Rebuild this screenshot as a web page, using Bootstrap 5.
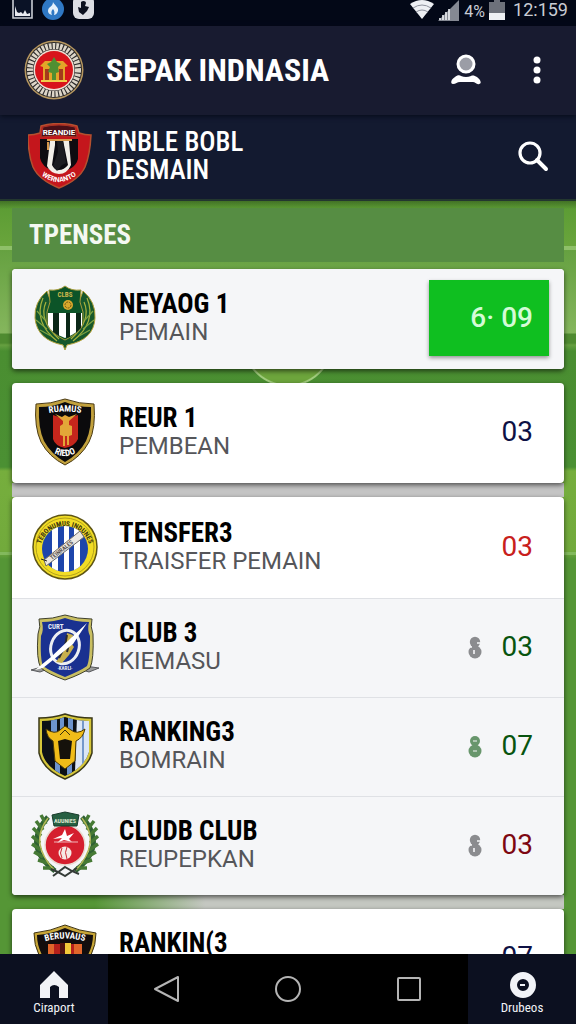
<!DOCTYPE html>
<html lang="id">
<head>
<meta charset="utf-8">
<meta name="viewport" content="width=device-width, initial-scale=1">
<title>Sepak Indnasia</title>
<link href="https://cdn.jsdelivr.net/npm/bootstrap@5.3.0/dist/css/bootstrap.min.css" rel="stylesheet">
<style>
body{font-family:Roboto,"Liberation Sans",sans-serif;background:#559636}
h1,h2,h3,.tab{font-family:"Roboto Condensed",Roboto,"Liberation Sans",sans-serif}
.statusbar{height:26px;background:#030817;color:#c9ccd4;font-size:18px;line-height:20px}
.statusbar small{font-size:16px}
.topbar{height:89px;background:#181b30;box-shadow:0 1px 5px #050a18;z-index:1}
.topbar,.subbar{padding:0 24px 2px;gap:22px}
.topbar h1{font-size:32px;line-height:36px;font-weight:700}
.subbar{height:86px;background:#131a30;border-bottom:2px solid #23372f}
.subbar h2{font-size:27px;line-height:28px;font-weight:500}
.subbar .club-mark{margin:0 -8px 0 4px}
.iconbtn{background:none;border:0;padding:0;color:#fff;line-height:0}
.pitch{scrollbar-width:none;background:
 linear-gradient(#0004,#0000) 0 0/100% 8px no-repeat,
 linear-gradient(#8fc069,#8fc069) 0 45px/100% 4px no-repeat,
 linear-gradient(#82b95c,#82b95c) 0 351px/100% 3px no-repeat,
 radial-gradient(circle at 50% -28px,#6da53c 43px,#a0cb7c 44px,#a0cb7c 45px,#0000 46px) 0 168px/100% 20px no-repeat,
 linear-gradient(#5a9b33 0,#6aa53c 46px,#66a141 50px,#85b65d 132px,#4f8b30 133px,#4f8b30 142px,#66a040 144px,#4a8e31 150px,#4b9033 266px,#76ae3d 270px,#72aa3c 350px,#559636 358px)}
.pitch::-webkit-scrollbar{display:none}
.section-title{height:54px;margin-top:7px;margin-bottom:7px;padding-left:17px;background:#568d43}
.section-title h2{color:#f4f8f2;font-size:27px;line-height:32px;font-weight:700}
.panel{position:relative;border-radius:4px;box-shadow:0 2px 5px #0009;background:#fff}
.gutter{height:14px}
.gutter-grey{background:#c4c4c4}
.gutter-fade{background:linear-gradient(90deg,#c4c7c100 15%,#c4c7c1 35%)}
.entry{min-height:98px;padding:14px 15px 16px 19px;gap:20px;border-bottom:1px solid #dfe1e5}
.entry:last-child{border-bottom:0}
.tall{min-height:100px}
.lead-entry{min-height:102px}
.tint{background:#f5f6f8}
.tint:last-child{border-radius:0 0 4px 4px}
.crest{width:68px;height:68px;flex:none}
.crest text{font-family:"Roboto Condensed",Roboto,sans-serif;font-weight:700}
.entry h3{font-size:27px;line-height:28px;font-weight:700;color:#000}
.entry p{font-size:24px;line-height:28px;min-height:28px;color:#55565a}
.score{font-size:28px;line-height:32px;padding-right:16px}
.scorebox{width:120px;height:76px;margin:-3px 0;background:#0fbf20;color:#d4fbd6;font-weight:500;box-shadow:0 2px 4px #0006}
.navy{color:#0e1145}.red{color:#c8201c}.green{color:#08540f}.maroon{color:#7d0711}
.form-icon{width:14px;height:23px;color:#8b8c8f}
.form-icon.up{color:#68966c}
.bottombar{height:70px;background:#000}
.tab{width:108px;padding-top:16px;background:#0c1020;color:#f2f3f7;font-size:13px;line-height:16px;text-decoration:none}
</style>
</head>
<body class="vh-100 d-flex flex-column overflow-hidden">

<div class="statusbar d-flex align-items-start flex-shrink-0 px-2">
  <div class="d-flex gap-2 ps-1">
    <svg width="22" height="20" viewBox="0 0 22 20"><path d="M1 0V18H20V0" fill="#0a1226" stroke="#c9ccd4" stroke-width="1.6"/><path d="M3 16V6l2 6 2 1 2-1 2 2 2-4 2 4 3-1v3z" fill="#e8eaf0"/></svg>
    <svg width="22" height="20" viewBox="0 0 22 20"><circle cx="11" cy="9" r="11" fill="#2f78c4"/><path d="M11 2c1 3 6 5 5 9-1 3-3 4-4 4 1-3 0-5-1-6-2 2-2 4-1 6-4-1-5-4-3-7 2-2 4-3 4-6z" fill="#e4f0fb"/></svg>
    <svg width="22" height="20" viewBox="0 0 22 20"><rect x="1" y="-4" width="21" height="23" rx="6" fill="#dcdde3"/><path d="M9 2c2-2 5-1 5 1l-1 3 4 1-2 4-4 4-4-3-1-5 3 1z" fill="#0b0f1e"/></svg>
  </div>
  <div class="d-flex align-items-start gap-1 ms-auto">
    <svg width="24" height="20" viewBox="0 0 24 20"><path d="M0 4Q12-4 24 4L12 19z" fill="#eef0f4"/><path d="M3 8Q12 2 21 8M6 12q6-4 12 0" fill="none" stroke="#8d919c"/></svg>
    <svg width="22" height="21" viewBox="0 0 22 21"><path d="M21 0V21H0z" fill="#858993"/><path d="M2 20v-2M5 20v-5M8 20v-8M11 20V9" stroke="#eef0f4" stroke-width="1.6"/></svg>
    <small class="pt-1 lh-1">4%</small>
    <svg width="16" height="20" viewBox="0 0 16 20"><path d="M0 2h5V0h6v2h5v11H0z" fill="#6d717b"/><path d="M0 13h16v7H0z" fill="#eef0f4"/></svg>
    <span class="ms-1">12:159</span>
  </div>
</div>

<header class="topbar d-flex align-items-center flex-shrink-0 position-relative text-white">
  <svg class="flex-shrink-0" width="60" height="62" viewBox="0 0 60 62" aria-hidden="true">
    <circle cx="30" cy="31" r="29.5" fill="#b6975f"/><circle cx="30" cy="31" r="28" fill="#2c2a2a"/>
    <circle cx="30" cy="31" r="24" fill="none" stroke="#ddd6c8" stroke-width="6" stroke-dasharray="2.6 1.1"/>
    <circle cx="30" cy="31" r="20.5" fill="#eee2d6"/><circle cx="30" cy="31" r="19" fill="#d8141b"/>
    <path d="M16 27l5-5h18l5 5-3 1v14H19V28z" fill="#e3a528"/><path d="M21 30h4v11h-4zM35 30h4v11h-4z" fill="#a5391b"/><path d="M30 18l3 5 4 2-3 3 1 5-3 1v7h-4v-7l-4-1 2-5-3-3 4-2z" fill="#4f8f32"/><path d="M17 42h26" stroke="#f0cd4b" stroke-width="2"/>
  </svg>
  <h1 class="m-0 text-nowrap">SEPAK INDNASIA</h1>
  <button class="iconbtn ms-auto" type="button" aria-label="Profil">
    <svg width="32" height="32" viewBox="0 0 32 32"><circle cx="16" cy="10" r="8" fill="#9b9da6" stroke="#fff" stroke-width="3"/><path d="M3 30c-3 0-2-5 2-7 2-2 5-2 6-1q5 2 10 0c2-1 4 0 6 1 4 3 5 7 2 7-2 1-4-2-6-2H10c-3 0-4 2-7 2z" fill="#fff"/></svg>
  </button>
  <button class="iconbtn ms-4" type="button" aria-label="Menu">
    <svg width="24" height="30" viewBox="0 0 24 30" fill="#fff"><circle cx="9" cy="5" r="3.5"/><circle cx="9" cy="15" r="3.5"/><circle cx="9" cy="25" r="3.5"/></svg>
  </button>
</header>

<div class="subbar d-flex align-items-center flex-shrink-0 text-white">
  <svg class="club-mark flex-shrink-0" width="64" height="66" viewBox="0 0 64 66" aria-hidden="true">
    <path d="M13 3Q31-2 49 3l2 7q6 2 12 2-1 20-6 32-6 13-26 21Q11 57 5 44 0 31 0 12q6 0 12-2z" fill="#c4161c" stroke="#b5502f" stroke-width="1.5"/>
    <path d="M12 16h38v20q-3 11-19 13-16-2-19-14z" fill="#0d0b10"/><path d="M22 18l5-2v6l-3 20q3 6 7 5 5 0 9-5l-5-25 6 1 2 24q-4 9-12 9-9-1-12-8z" fill="#f3efe8"/><path d="M19 17h25M20 19v8" stroke="#d89a4d" stroke-width="2"/><path d="M29 18h6l3 22-4 2-5 6-4-5 5-14z" fill="#1d1c20"/>
    <path d="M15 4q16-4 32 0l2 10q-18-3-36 0z" fill="#4a0f17" stroke="#a53625"/>
    <text x="31" y="12" font-size="8" font-weight="700" text-anchor="middle" fill="#fff">REANDIE</text>
    <path id="subArc" d="M12 51q19 16 38 0" fill="none"/><text font-size="7" font-weight="700" fill="#fff" text-anchor="middle"><textPath href="#subArc" startOffset="50%">WERNANTO</textPath></text>
  </svg>
  <h2 class="m-0">TNBLE BOBL<br>DESMAIN</h2>
  <button class="iconbtn ms-auto" type="button" aria-label="Cari">
    <svg width="34" height="32" viewBox="0 0 34 32" fill="none" stroke="#fff"><circle cx="12" cy="13" r="10" stroke-width="3.2"/><path d="M19 20l9 9" stroke-width="4" stroke-linecap="round"/></svg>
  </button>
</div>

<main class="pitch flex-grow-1 overflow-auto">
<div class="px-2 mx-1">
  <div class="section-title d-flex align-items-center"><h2 class="m-0">TPENSES</h2></div>

  <section class="panel">
    <article class="entry tall tint d-flex align-items-center rounded-1">
      <svg class="crest" viewBox="0 0 68 68" aria-hidden="true">
        <path d="M16 7Q3 18 4 34q2 22 28 27l2 5 2-5q27-5 28-27Q65 18 52 7l-5 14 3 20-16 14-16-14 3-20z" fill="#17582c" stroke="#b5a33c"/>
        <path d="M12 14Q2 38 26 57M15 18Q7 36 28 55M56 14q10 24-14 43M53 18q8 18-13 37" fill="none" stroke="#a8b33d" stroke-width="1.2"/>
        <path d="M6 27l8 9M5 36l11 9M9 46l11 6M62 27l-8 9M63 36l-11 9M59 46l-11 6" stroke="#7ea341" stroke-width="1.2"/>
        <path d="M18 6q10 1 16-4 6 5 16 4l-1 12 3 10v12q-3 9-18 16-15-7-18-16V28l3-10z" fill="#0c5428" stroke="#a59b3a"/>
        <path d="M17 29h34v12q-3 8-17 13-14-5-17-13z" fill="#fff"/><path d="M22 29h6v23l-6-4zM35 29h4v24l-4 1zM45 29h5v15l-5 5z" fill="#0b2818"/>
        <circle cx="37" cy="21" r="5" fill="#d8a82d"/><circle cx="37" cy="21" r="3" fill="none" stroke="#745b14" stroke-dasharray="2 1"/>
        <text x="34" y="13" font-size="7" text-anchor="middle" fill="#c8b54b">CLBS</text>
      </svg>
      <div class="flex-grow-1"><h3 class="m-0">NEYAOG 1</h3><p class="m-0">PEMAIN</p></div>
      <div class="score scorebox d-flex align-items-center justify-content-end">6· 09</div>
    </article>
  </section>
  <div class="gutter"></div>

  <section class="panel">
    <article class="entry tall d-flex align-items-center">
      <svg class="crest" viewBox="0 0 68 68" aria-hidden="true">
        <path d="M5 6Q20 6 34 1q14 5 29 5 2 24-5 38-8 15-24 23Q18 59 10 44 3 29 5 6z" fill="#c2a13d" stroke="#4a3a12"/><path d="M8 9q14 0 26-5 12 5 26 5 1 21-5 34-7 13-21 21Q20 56 13 43 7 30 8 9z" fill="#0b0a0c"/>
        <path d="M22 17l12 4 13-4v24q-3 7-13 9-10-2-12-9z" fill="#c5261c"/><path d="M24 16l7 3 3-2 4 2 8-3-8 7v4l3 1v9l-3 1v9h-2v-9h-2v10h-2V38l-3-1v-9l3-2v-3z" fill="#e3a738"/>
        <path id="ruArc" d="M13 16q21-5 42 0" fill="none"/><text font-size="9" fill="#fff" text-anchor="middle"><textPath href="#ruArc" startOffset="50%">RUAMUS</textPath></text>
        <path id="rdArc" d="M17 51q17 14 34 0" fill="none"/><text font-size="9" fill="#fff" text-anchor="middle"><textPath href="#rdArc" startOffset="50%">RIEDO</textPath></text>
      </svg>
      <div class="flex-grow-1"><h3 class="m-0">REUR 1</h3><p class="m-0">PEMBEAN</p></div>
      <div class="score navy">03</div>
    </article>
  </section>
  <div class="gutter gutter-grey"></div>

  <section class="panel">
    <article class="entry lead-entry d-flex align-items-center">
      <svg class="crest" viewBox="0 0 68 68" aria-hidden="true">
        <circle cx="34" cy="34" r="32" fill="#f1dc25" stroke="#5e5514" stroke-width="1.5"/><circle cx="34" cy="34" r="29" fill="none" stroke="#b2a11c"/>
        <path id="tnArc" d="M9 38a25 25 0 1 1 50 0" fill="none"/><text font-size="7" fill="#3b350f" text-anchor="middle"><textPath href="#tnArc" startOffset="50%">TEBONUMUS INDUNES</textPath></text>
        <clipPath id="disc"><circle cx="34" cy="36" r="23"/></clipPath>
        <g clip-path="url(#disc)"><path d="M10 12h50v50H10z" fill="#1d45ab"/><path d="M21 10h6v50h-6zM33 10h5v50h-5zM43 10h6v50h-6z" fill="#fff"/></g>
        <path d="M13 47l36-29 4 6-38 29z" fill="#ece8e2" stroke="#6d6b6a"/><path d="M10 46l6 2" stroke="#222"/>
        <text x="21" y="47" font-size="6" fill="#5a5350" transform="rotate(-38 21 47)">TEINRALES</text>
      </svg>
      <div class="flex-grow-1"><h3 class="m-0">TENSFER3</h3><p class="m-0">TRAISFER PEMAIN</p></div>
      <div class="score red">03</div>
    </article>
    <article class="entry tint d-flex align-items-center">
      <svg class="crest" viewBox="0 0 68 68" aria-hidden="true">
        <path d="M0 57l14-4 5 2-10 4zM68 55l-14-2-6 3 10 3z" fill="#9b9c9c" stroke="#55575a"/>
        <path d="M8 6q14 0 26-4 12 4 27 4-2 8 1 15 1 26-3 34-8 6-25 12-17-6-24-12Q5 47 7 21q3-7 1-15z" fill="#c9bf62" stroke="#3e3f2b"/><path d="M11 9q12 0 23-4 11 4 24 4-2 8 1 14 0 23-3 30-7 5-22 11-15-6-22-11-3-7-2-30 3-6 1-14z" fill="#1a3190"/>
        <ellipse cx="34" cy="34" rx="14" ry="17" transform="rotate(20 34 34)" fill="none" stroke="#eceef2" stroke-width="3"/><path d="M36 20l6 2-2 8 3 4-5 8-7 8-6-1 9-13z" fill="#c8b04c"/><path d="M36 22l-2 11-6 12M39 27l-3 12" stroke="#2a2c32" stroke-width="2" fill="none"/>
        <path d="M56 10L42 31 12 55l-8 2 16-13 21-20z" fill="#fff"/>
        <text x="17" y="16" font-size="7" fill="#e8ecf6">CURT</text><text x="34" y="57" font-size="5" text-anchor="middle" fill="#e8ecf6">·KARLI·</text>
      </svg>
      <div class="flex-grow-1"><h3 class="m-0">CLUB 3</h3><p class="m-0">KIEMASU</p></div>
      <svg class="form-icon" viewBox="0 0 14 23"><circle cx="7" cy="6" r="5.2" fill="currentColor"/><path d="M4 8l6 5" stroke="currentColor" stroke-width="4"/><circle cx="7" cy="16" r="6.5" fill="currentColor"/><path d="M9 7h5M0 11h4M6 14v4" stroke="#f5f6f8" stroke-width="1.6"/></svg>
      <div class="score green">03</div>
    </article>
    <article class="entry tint d-flex align-items-center">
      <svg class="crest" viewBox="0 0 68 68" aria-hidden="true">
        <path d="M8 6q14 0 26-4 12 4 27 4v35Q56 58 34 67 12 58 8 41z" fill="#d5c63a" stroke="#3a3818" stroke-width="1.5"/><clipPath id="rk"><path d="M11 9q12 0 23-4 12 4 24 4v31Q54 55 34 64 14 55 11 40z"/></clipPath>
        <g clip-path="url(#rk)"><path d="M10 4h50v62H10z" fill="#0c1016"/><path d="M20 4h6v18h-6zM29 4h4v18h-4zM37 4h5v18h-5zM24 50h5v14h-5zM36 50h5v14h-5z" fill="#6c93ce"/><path d="M46 4h14v56H44z" fill="#dbe6f5"/><path d="M51 8h2v46h-2z" fill="#7598ca"/></g>
        <path d="M15 17q9 6 14 1l5-4 6 4q6 5 14-1-2 9-9 12l-1 20-10 8-10-8-2-20q-6-3-7-12z" fill="#f0bc19" stroke="#493908"/><path d="M27 29l7-2 7 2-2 18H29z" fill="#15120b"/><path d="M29 23l5-5 5 5" stroke="#3d300a" fill="none"/>
      </svg>
      <div class="flex-grow-1"><h3 class="m-0">RANKING3</h3><p class="m-0">BOMRAIN</p></div>
      <svg class="form-icon up" viewBox="0 0 14 23"><circle cx="7" cy="6" r="5" fill="currentColor"/><circle cx="7" cy="16" r="6.5" fill="currentColor"/><path d="M5 6h4M5 16h4" stroke="#f5f6f8"/></svg>
      <div class="score green">07</div>
    </article>
    <article class="entry tint d-flex align-items-center">
      <svg class="crest" viewBox="0 0 68 68" aria-hidden="true">
        <path d="M17 6Q-9 35 24 60M51 6q26 29-7 54" fill="none" stroke="#2f6134" stroke-width="5"/>
        <path d="M15 13L10 4M12 19L5 10M10 25L2 17M9 32l-8-7M10 39l-9-6M12 46l-9-5M17 52l-10-3M23 57l-11 0M53 13l5-9M56 19l7-9M58 25l8-8M59 32l8-7M58 39l9-6M56 46l9-5M51 52l10-3M45 57h11" stroke="#467a35" stroke-width="3.5"/>
        <path d="M17 7Q7 20 9 33t14 26M51 7q10 13 8 26T45 59" fill="none" stroke="#b5b857" stroke-width="1.5"/>
        <circle cx="34" cy="34" r="20" fill="#d51f2e" stroke="#e9dcd2" stroke-width="1.5"/>
        <path d="M21 4l13-3 14 3-2 11H23z" fill="#276042" stroke="#173a2a"/><text x="34" y="12" font-size="6" text-anchor="middle" fill="#dfe6cf">AUUNIES</text>
        <path d="M34 18l2 7 7-3-5 6 3 3-8-2-7 3 5-5-9 1 9-4z" fill="#fff"/><path d="M23 31h24" stroke="#f0b8ba"/><circle cx="34" cy="42" r="6.5" fill="#f6e9e5"/><path d="M31 37q-3 5 0 10M36 36q-3 5 0 12" stroke="#cf2a35" fill="none"/>
        <path d="M20 58q8 3 14 7l12-8M48 63q-8-3-14-7L22 65" fill="none" stroke="#343b37" stroke-width="2"/>
      </svg>
      <div class="flex-grow-1"><h3 class="m-0">CLUDB CLUB</h3><p class="m-0">REUPEPKAN</p></div>
      <svg class="form-icon" viewBox="0 0 14 23"><circle cx="7" cy="6" r="5.2" fill="currentColor"/><path d="M4 8l6 5" stroke="currentColor" stroke-width="4"/><circle cx="7" cy="16" r="6.5" fill="currentColor"/><path d="M9 7h5M0 11h4M6 14v4" stroke="#f5f6f8" stroke-width="1.6"/></svg>
      <div class="score maroon">03</div>
    </article>
  </section>
  <div class="gutter gutter-fade"></div>

  <section class="panel mb-3">
    <article class="entry d-flex align-items-center">
      <svg class="crest" viewBox="0 0 68 68" aria-hidden="true">
        <path d="M3 10Q20 8 34 2q14 6 31 8 0 12-5 22-4 24-26 34Q12 56 8 32 3 22 3 10z" fill="#c8a637" stroke="#3d3210"/><path d="M6 12q14-1 28-7 14 6 28 7 0 10-5 20-4 22-23 31-19-9-23-31-5-10-5-20z" fill="#120d0d"/>
        <path d="M17 21h34v20q-4 10-17 16-13-6-17-16z" fill="#b5201b"/><path d="M17 21h6v28l-6-8zM43 21h8v20l-8 9z" fill="#e0662b"/><path d="M34 20h6v34l-6 3z" fill="#f2c93a"/><path d="M29 20h5v36l-5-3z" fill="#501310"/>
        <path id="rlArc" d="M12 19q22-7 44 0" fill="none"/><text font-size="9" fill="#fff" text-anchor="middle"><textPath href="#rlArc" startOffset="50%">BERUVAUS</textPath></text>
      </svg>
      <div class="flex-grow-1"><h3 class="m-0">RANKIN(3</h3><p class="m-0"></p></div>
      <div class="score navy">07</div>
    </article>
  </section>
</div>
</main>

<nav class="bottombar d-flex flex-shrink-0" aria-label="Navigasi">
  <a href="#" class="tab d-flex flex-column align-items-center">
    <svg width="30" height="30" viewBox="0 0 30 30"><path d="M15 1l14 14v13H20V17q-5-4-9 0v11H1V15z" fill="#f2f3f7"/></svg>
    <span>Ciraport</span>
  </a>
  <div class="d-flex flex-grow-1 align-items-center justify-content-around">
    <button class="iconbtn" type="button" aria-label="Kembali"><svg width="28" height="30" viewBox="0 0 28 30"><path d="M23 3v24L0 15z" transform="translate(1)" fill="none" stroke="#b4b4b4" stroke-width="2" stroke-linejoin="round"/></svg></button>
    <button class="iconbtn" type="button" aria-label="Beranda"><svg width="28" height="28" viewBox="0 0 28 28"><circle cx="13" cy="14" r="12" fill="none" stroke="#b4b4b4" stroke-width="2"/></svg></button>
    <button class="iconbtn" type="button" aria-label="Aplikasi terbaru"><svg width="26" height="26" viewBox="0 0 26 26"><rect x="2" y="2" width="22" height="22" rx="1" fill="none" stroke="#b4b4b4" stroke-width="2"/></svg></button>
  </div>
  <a href="#" class="tab d-flex flex-column align-items-center">
    <svg width="28" height="30" viewBox="0 0 28 30"><circle cx="15" cy="15" r="9.5" fill="none" stroke="#f2f3f7" stroke-width="7"/><path d="M12 15h5" stroke="#f2f3f7" stroke-width="2"/></svg>
    <span>Drubeos</span>
  </a>
</nav>
<script src="https://cdn.jsdelivr.net/npm/bootstrap@5.3.0/dist/js/bootstrap.bundle.min.js"></script>
</body>
</html>
